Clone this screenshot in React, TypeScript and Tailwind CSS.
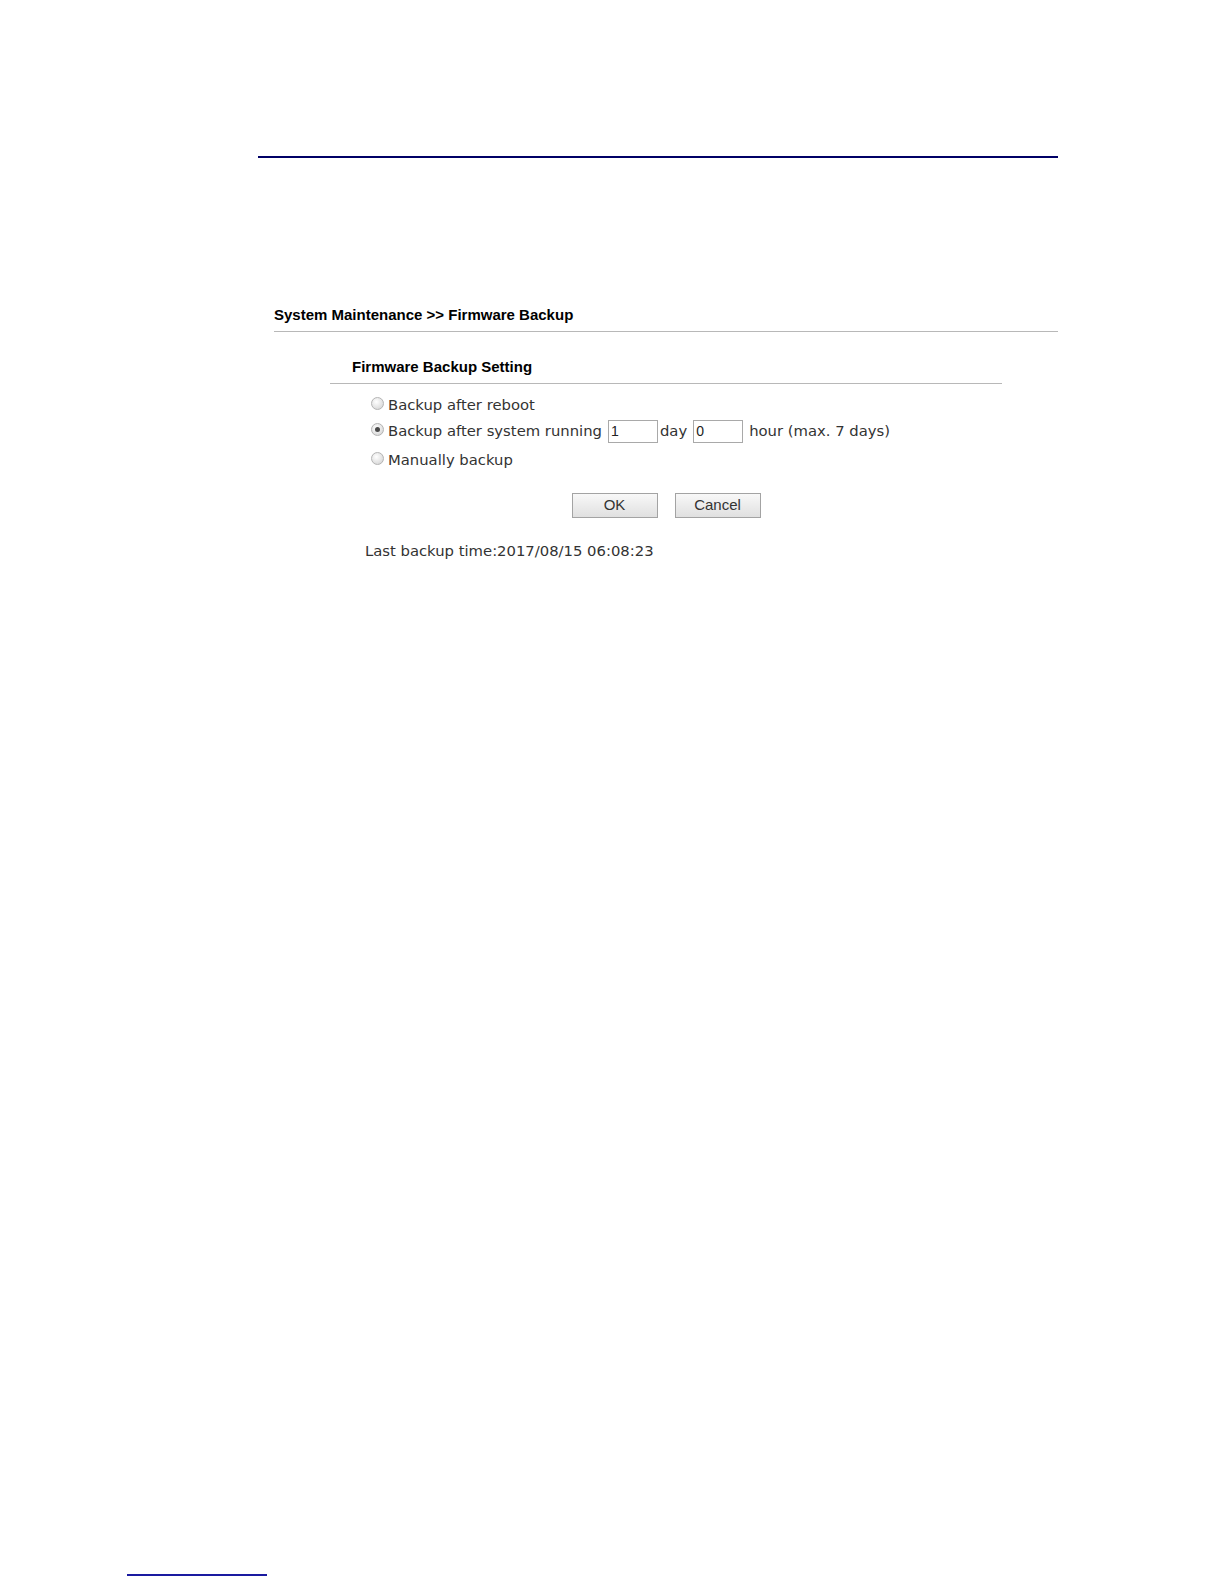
import React from 'react';

const body = "font-['DejaVu_Sans',sans-serif] text-[14.8px] text-[#333]";

function Radio({ checked }: { checked?: boolean }) {
  return (
    <span className="relative mr-[4px] inline-block h-[13px] w-[13px] -translate-y-[2px] rounded-full border border-[#b4b4b4] bg-[radial-gradient(circle_at_40%_35%,#ffffff,#e2e2e2_60%,#cfcfcf)]">
      {checked && (
        <span className="absolute left-[3px] top-[3px] h-[5px] w-[5px] rounded-full bg-[#4a4a4a]" />
      )}
    </span>
  );
}

function Field({ value }: { value: string }) {
  return (
    <input
      readOnly
      value={value}
      className="h-[23px] w-[50px] border border-[#a9a9a9] bg-white px-[2px] font-['Liberation_Sans',sans-serif] text-[14px] text-[#222] outline-none"
    />
  );
}

function Button({ label }: { label: string }) {
  return (
    <button className="h-[25px] w-[86px] border border-[#a3a3a3] bg-[linear-gradient(#f8f8f8,#e0e0e0)] font-['Liberation_Sans',sans-serif] text-[15px] text-[#333]">
      {label}
    </button>
  );
}

export default function App() {
  return (
    <div className="flex h-screen w-full flex-col overflow-hidden bg-white">
      <div className="ml-[258px] mt-[156px] h-[2px] w-[800px] bg-[#000066]" />

      <div className="ml-[274px] mt-[147px] w-[784px] border-b border-[#b8b8b8] pb-[6px]">
        <h1 className="font-['Liberation_Sans',sans-serif] text-[15px] font-bold leading-[20px] text-black">
          System Maintenance &gt;&gt; Firmware Backup
        </h1>
      </div>

      <div className="ml-[330px] mt-[25px] w-[672px]">
        <div className="border-b border-[#b8b8b8] pb-[6px] pl-[22px]">
          <h2 className="font-['Liberation_Sans',sans-serif] text-[15px] font-bold leading-[20px] text-black">
            Firmware Backup Setting
          </h2>
        </div>

        <div className={`pl-[41px] ${body}`}>
          <div className="mt-[9px] flex h-[24px] items-center">
            <Radio />
            Backup after reboot
          </div>
          <div className="flex h-[28px] items-center">
            <Radio checked />
            <span className="mr-[6px]">Backup after system running</span>
            <Field value="1" />
            <span className="ml-[2px] mr-[6px]">day</span>
            <Field value="0" />
            <span className="ml-[6px]">hour (max. 7 days)</span>
          </div>
          <div className="flex h-[30px] items-center">
            <Radio />
            Manually backup
          </div>
        </div>

        <div className="mt-[18px] flex justify-center gap-[17px]">
          <Button label="OK" />
          <Button label="Cancel" />
        </div>

        <p className={`ml-[35px] mt-[23px] leading-[20px] ${body}`}>
          Last backup time:2017/08/15 06:08:23
        </p>
      </div>

      <div className="mb-[8px] ml-[127px] mt-auto h-[2px] w-[140px] bg-[#1a1aa0]" />
    </div>
  );
}
